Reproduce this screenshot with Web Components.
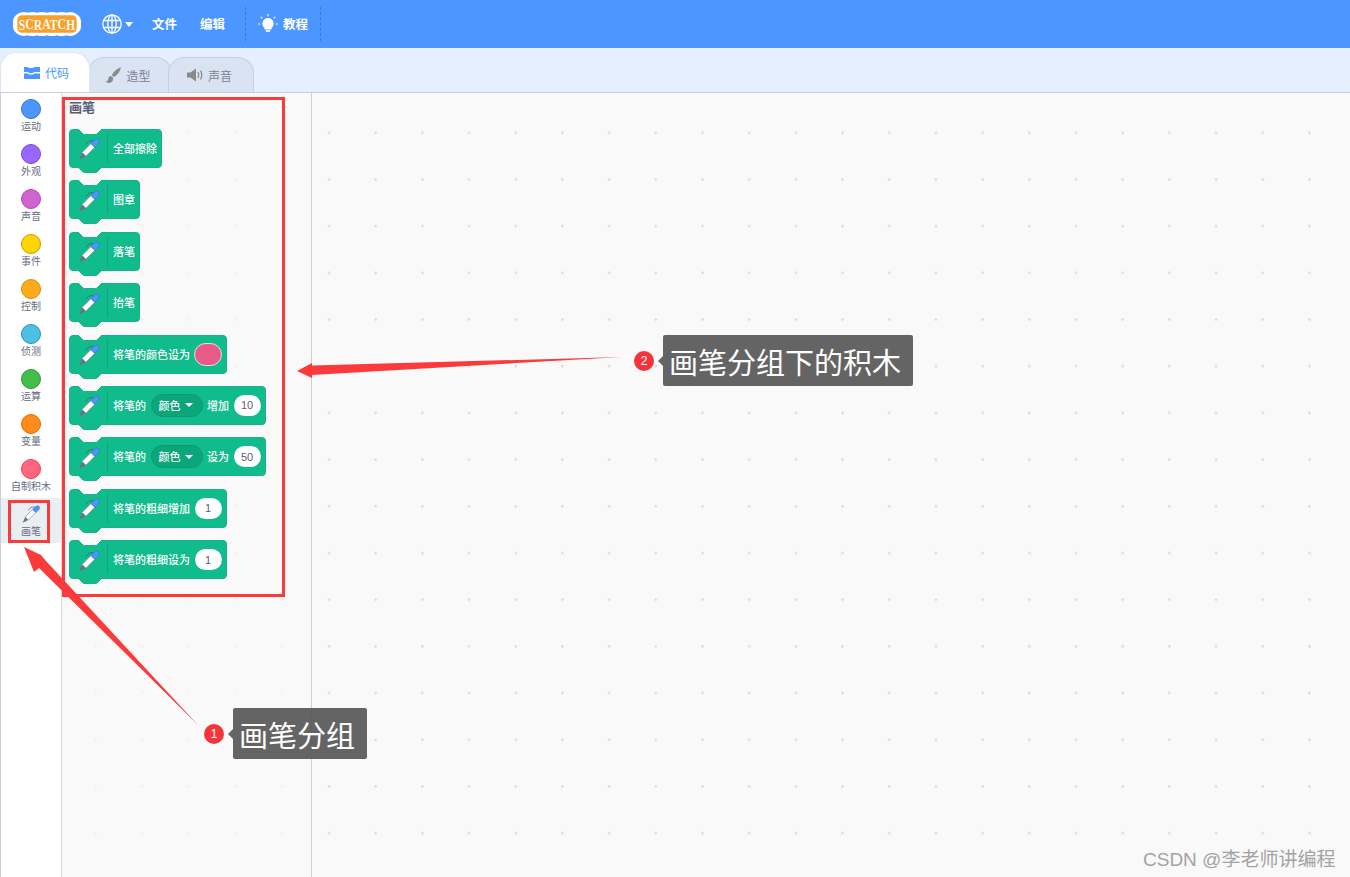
<!DOCTYPE html>
<html lang="zh">
<head>
<meta charset="utf-8">
<title>Scratch</title>
<style>
    html, body { margin: 0; height: 100%; overflow: hidden; }
    body { font-family: "Noto Sans CJK SC", "Liberation Sans", sans-serif; }
</style>
</head>
<body>
<scratch-app>
    <menu-bar></menu-bar>
    <editor-tabs></editor-tabs>
    <editor-body>
        <category-rail>
            <category-item color="#4c97ff" edge="#3373cc" label="运动"></category-item>
            <category-item color="#9966ff" edge="#774dcb" label="外观"></category-item>
            <category-item color="#cf63cf" edge="#bd42bd" label="声音"></category-item>
            <category-item color="#ffd500" edge="#cc9900" label="事件"></category-item>
            <category-item color="#ffab19" edge="#cf8b17" label="控制"></category-item>
            <category-item color="#4cbfe6" edge="#2e8eb8" label="侦测"></category-item>
            <category-item color="#40bf4a" edge="#389438" label="运算"></category-item>
            <category-item color="#ff8c1a" edge="#db6e00" label="变量"></category-item>
            <category-item color="#ff6680" edge="#ff3355" label="自制积木"></category-item>
            <category-item pen selected label="画笔"></category-item>
        </category-rail>
        <block-flyout title-text="画笔">
            <scratch-block>全部擦除</scratch-block>
            <scratch-block>图章</scratch-block>
            <scratch-block>落笔</scratch-block>
            <scratch-block>抬笔</scratch-block>
            <scratch-block>将笔的颜色设为<block-color></block-color></scratch-block>
            <scratch-block>将笔的<block-menu>颜色</block-menu>增加<block-input>10</block-input></scratch-block>
            <scratch-block>将笔的<block-menu>颜色</block-menu>设为<block-input>50</block-input></scratch-block>
            <scratch-block>将笔的粗细增加<block-input>1</block-input></scratch-block>
            <scratch-block>将笔的粗细设为<block-input>1</block-input></scratch-block>
        </block-flyout>
        <code-workspace></code-workspace>
    </editor-body>
    <callout-layer></callout-layer>
</scratch-app>

<script>
const PEN_SVG = `
    <svg viewBox="0 0 24 24" width="100%" height="100%">
        <path d="M8.500 7.500Q12 2.500 16.500 3.500" fill="none" stroke="#575e75" stroke-width=".9"/>
        <path d="M5 15.500L14 6.500L17.800 10.300L8.800 19.300Z" fill="#fff" stroke="#8a8fa3" stroke-width=".8"/>
        <path d="M14 6.500L17.500 3Q20 1.300 21.700 2.700Q23 4.300 21.300 6.800L17.800 10.300Z" fill="#4c97ff" stroke="#3d6fc4" stroke-width=".6"/>
        <path d="M5 15.500L8.800 19.300L2 22.500Z" fill="#6a6f8a"/>
    </svg>`;

class ScratchApp extends HTMLElement {
    constructor() {
        super();
        this.attachShadow({ mode: 'open' });
        this.shadowRoot.innerHTML = `
            <style>
                :host { display: flex; flex-direction: column; position: relative; height: 877px; width: 1350px; overflow: hidden; }
            </style>
            <slot></slot>`;
    }
}

class MenuBar extends HTMLElement {
    constructor() {
        super();
        this.attachShadow({ mode: 'open' });
        this.shadowRoot.innerHTML = `
            <style>
                :host { display: flex; align-items: center; height: 48px; flex: none; background: #4c97ff; color: #fff;
                        font-size: 12.500px; font-weight: 700; }
                .logo { width: 70px; height: 26px; margin-left: 12px; display: block; flex: none; }
                .logo text { font-family: "Liberation Serif", serif; font-weight: 700; font-size: 12px; }
                .lang { display: flex; align-items: center; margin-left: 20px; gap: 3px; }
                .caret { width: 0; height: 0; border: 4.500px solid transparent; border-top: 5px solid #fff; border-bottom: 0; }
                .item { white-space: nowrap; padding-bottom: 2px; }
                .file { margin-left: 19px; }
                .edit { margin-left: 23px; }
                .tutorial { display: flex; align-items: center; height: 34px; width: 76px; margin-left: 20px; padding-left: 12px;
                            box-sizing: border-box; gap: 5px; border-left: 1px dashed #3a78cc; border-right: 1px dashed #3a78cc; }
            </style>
            <svg class="logo" viewBox="0 0 72 28" preserveAspectRatio="none">
                <path d="M6 3Q11 0 16 2Q21 0 26 2Q31 0 36 2Q41 0 46 2Q51 0 56 2Q61 0 66 3Q72 7 71 14Q72 21 66 25Q61 28 56 26Q51 28 46 26Q41 28 36 26Q31 28 26 26Q21 28 16 26Q11 28 6 25Q0 21 1 14Q0 7 6 3Z" fill="#fff"/>
                <rect x="5.500" y="4.500" width="61" height="19" rx="5" fill="#f7a02c"/>
                <g transform="translate(0 -7.500) scale(1 1.400)">
                    <text x="7" y="20" dy="0 -1 1 -1 1 -1 1" fill="#fff8ea">SCRATCH</text>
                </g>
            </svg>
            <div class="lang">
                <svg width="20" height="20" viewBox="0 0 20 20" fill="none" stroke="#fff" stroke-width="1.300">
                    <circle cx="10" cy="10" r="9.200"/>
                    <ellipse cx="10" cy="10" rx="4.200" ry="9.200"/>
                    <path d="M10 .8V19.200M1.500 6.500H18.500M1.500 13.500H18.500"/>
                </svg>
                <span class="caret"></span>
            </div>
            <span class="item file">文件</span>
            <span class="item edit">编辑</span>
            <div class="tutorial">
                <svg width="20" height="20" viewBox="0 0 20 20" fill="none" stroke="#fff" stroke-width="1.200">
                    <path d="M10 4.500A5 5 0 0 1 13 13.500V15H7V13.500A5 5 0 0 1 10 4.500Z" fill="#fff"/>
                    <path d="M7.800 17H12.200" stroke-width="1.600"/>
                    <path d="M10 0V2.300M2.800 2.800L4.300 4.400M17.200 2.800L15.700 4.400M0 10H2.200M17.800 10H20"/>
                </svg>
                <span class="item">教程</span>
            </div>`;
    }
}

class EditorTabs extends HTMLElement {
    constructor() {
        super();
        this.attachShadow({ mode: 'open' });
        this.shadowRoot.innerHTML = `
            <style>
                :host { display: flex; align-items: flex-end; height: 45px; flex: none; box-sizing: border-box;
                        background: #e5f0ff; border-bottom: 1px solid #c5cfdd; font-size: 12px; color: #7c8192; }
                .tab { display: flex; align-items: center; justify-content: center; gap: 4px; box-sizing: border-box; height: 35px;
                       width: 84px; margin-left: -2px; padding-right: 4px; background: #d9e3f2; border: 1px solid #c5cfdd; border-bottom: 0;
                       border-radius: 16px 16px 0 0; }
                .active { position: relative; z-index: 1; height: 40px; width: 90px; margin-left: 0; padding: 0 0 0 2px; background: #fff;
                          border-color: #dde6f2; color: #4c97ff; }
                .sound { width: 86px; margin-left: -4px; padding-right: 3px; }
            </style>
            <div class="tab active">
                <svg width="18" height="12" viewBox="0 0 18 12">
                    <path d="M1 0H5L6 1H10L11 0H17V5H11L10 6H6L5 5H1Z" fill="#4c97ff"/>
                    <path d="M1 6.500H5L6 7.500H10L11 6.500H17V12H1Z" fill="#4c97ff"/>
                </svg>
                <span>代码</span>
            </div>
            <div class="tab">
                <svg width="17" height="17" viewBox="0 0 17 17">
                    <path d="M16 .5C13 1 9 4 6.800 8.200L9 10.200C12.500 7.500 15.500 4 16 .5Z" fill="#8a8a8a"/>
                    <path d="M5.800 9C3.500 9.300 3.500 11.500 3 13C2.600 14 1.500 14.500 .5 14.500C2 16.500 6 16.500 7.500 14C8.300 12.700 8.200 11 7.700 10.500Z" fill="#8a8a8a"/>
                </svg>
                <span>造型</span>
            </div>
            <div class="tab sound">
                <svg width="17" height="14" viewBox="0 0 17 14">
                    <path d="M0 4.500H3.500L9 .5V13.500L3.500 9.500H0Z" fill="#8a8a8a"/>
                    <path d="M11 4Q12.500 7 11 10M13.500 2.500Q16 7 13.500 11.500" fill="none" stroke="#8a8a8a" stroke-width="1.300"/>
                </svg>
                <span>声音</span>
            </div>`;
    }
}

class EditorBody extends HTMLElement {
    constructor() {
        super();
        this.attachShadow({ mode: 'open' });
        this.shadowRoot.innerHTML = `
            <style>
                :host { display: flex; flex: 1; min-height: 0; }
            </style>
            <slot></slot>`;
    }
}

class CategoryRail extends HTMLElement {
    constructor() {
        super();
        this.attachShadow({ mode: 'open' });
        this.shadowRoot.innerHTML = `
            <style>
                :host { display: flex; flex-direction: column; width: 62px; flex: none; box-sizing: border-box; background: #fff;
                        border-left: 1px solid #c5cfdd; border-right: 1px solid #d9d9d9; }
            </style>
            <slot></slot>`;
    }
}

class CategoryItem extends HTMLElement {
    constructor() {
        super();
        this.attachShadow({ mode: 'open' });
    }

    connectedCallback() {
        let label = this.getAttribute('label');
        let color = this.getAttribute('color');
        let edge = this.getAttribute('edge');
        let mark = this.hasAttribute('pen')
            ? `<div class="pen">${PEN_SVG}</div>`
            : `<div class="dot" style="background:${color};border-color:${edge}"></div>`;
        this.shadowRoot.innerHTML = `
            <style>
                :host { display: flex; flex-direction: column; align-items: center; height: 45px; box-sizing: border-box;
                        padding-top: 6px; font-size: 10px; color: #666c82; }
                :host([selected]) { background: #e9eef2; }
                .dot { width: 20px; height: 20px; box-sizing: border-box; border-radius: 50%; border: 1px solid; flex: none; }
                .pen { width: 20px; height: 20px; flex: none; }
                span { line-height: 14px; white-space: nowrap; }
            </style>
            ${mark}
            <span>${label}</span>`;
    }
}

class BlockFlyout extends HTMLElement {
    constructor() {
        super();
        this.attachShadow({ mode: 'open' });
    }

    connectedCallback() {
        this.shadowRoot.innerHTML = `
            <style>
                :host { display: flex; flex-direction: column; align-items: flex-start; width: 250px; flex: none; box-sizing: border-box;
                        padding: 4px 0 0 7px; gap: 12.400px; border-right: 1px solid #cfcfcf; background-color: #f9f9f9;
                        background-image: radial-gradient(circle, #f1f1f1 1px, transparent 1.500px);
                        background-size: 46.700px 46.700px; background-position: 10.300px 16.450px; }
                h2 { margin: 0 0 1px; height: 18.600px; font-size: 13px; line-height: 20px; font-weight: 700; color: #575e75; }
            </style>
            <h2>${this.getAttribute('title-text')}</h2>
            <slot></slot>`;
    }
}

class ScratchBlock extends HTMLElement {
    constructor() {
        super();
        this.attachShadow({ mode: 'open' });
        this.shadowRoot.innerHTML = `
            <style>
                :host { display: inline-flex; align-items: center; gap: 4.500px; position: relative; height: 39px; box-sizing: border-box;
                        padding-right: 4px; background: #10bc8c; border: 1px solid #1ab08a; border-radius: 4px; color: #fff;
                        font-size: 11px; font-weight: 500; line-height: 1; white-space: nowrap; }
                .pen { width: 24px; height: 24px; margin: 2px 1.500px 0 7px; flex: none; }
                .sep { width: 1px; height: 29px; background: #0da57a; margin-right: .5px; flex: none; }
                .notch, .bump { position: absolute; left: 8px; width: 24px; height: 6px; display: block; }
                .notch { top: -1px; }
                .bump { bottom: -6px; }
            </style>
            <svg class="notch" viewBox="0 0 24 6"><path d="M0 0L5 5Q5.500 5.500 6.500 5.500H17.500Q18.500 5.500 19 5L24 0Z" fill="#f9f9f9" stroke="#1ab08a" stroke-width="1"/><path d="M1 0H23" stroke="#f9f9f9" stroke-width="2"/></svg>
            <svg class="bump" viewBox="0 0 24 6"><path d="M0 0L5 5Q5.500 5.500 6.500 5.500H17.500Q18.500 5.500 19 5L24 0Z" fill="#10bc8c" stroke="#1ab08a" stroke-width="1"/><path d="M1 -.2H23" stroke="#10bc8c" stroke-width="1.500"/></svg>
            <div class="pen">${PEN_SVG}</div>
            <div class="sep"></div>
            <slot></slot>`;
    }
}

class BlockMenu extends HTMLElement {
    constructor() {
        super();
        this.attachShadow({ mode: 'open' });
        this.shadowRoot.innerHTML = `
            <style>
                :host { display: inline-flex; align-items: center; gap: 4px; height: 23px; box-sizing: border-box; padding: 0 9px 0 7px;
                        background: #0da57a; border: 1px solid #0b9a72; border-radius: 12px; font-size: 11px; }
                i { width: 0; height: 0; border: 4px solid transparent; border-top: 4.500px solid #fff; border-bottom: 0; }
            </style>
            <slot></slot><i></i>`;
    }
}

class BlockInput extends HTMLElement {
    constructor() {
        super();
        this.attachShadow({ mode: 'open' });
        this.shadowRoot.innerHTML = `
            <style>
                :host { display: inline-flex; align-items: center; justify-content: center; width: 27px; height: 21px; background: #fff;
                        border-radius: 11px; color: #575e75; font: 11px "Liberation Sans", sans-serif; }
            </style>
            <slot></slot>`;
    }
}

class BlockColor extends HTMLElement {
    constructor() {
        super();
        this.attachShadow({ mode: 'open' });
        this.shadowRoot.innerHTML = `
            <style>
                :host { display: block; width: 28px; height: 23px; box-sizing: border-box; margin-left: -1px; background: #e95a8b;
                        border: 1px solid #dfe6e8; border-radius: 11.500px; }
            </style>`;
    }
}

class CodeWorkspace extends HTMLElement {
    constructor() {
        super();
        this.attachShadow({ mode: 'open' });
        this.shadowRoot.innerHTML = `
            <style>
                :host { display: block; flex: 1; background-color: #f9f9f9;
                        background-image: radial-gradient(circle, #dcdcdc 1px, transparent 1.500px);
                        background-size: 46.700px 46.700px; background-position: -6.350px 16.450px; }
            </style>`;
    }
}

class CalloutTag extends HTMLElement {
    constructor() {
        super();
        this.attachShadow({ mode: 'open' });
        this.shadowRoot.innerHTML = `
            <style>
                :host { position: absolute; display: flex; align-items: center; gap: 9px; color: #fff; }
                b { width: 20px; height: 20px; border-radius: 50%; background: #f5333a; font: 12px/20px "Liberation Sans", sans-serif;
                    text-align: center; }
                div { position: relative; height: 51px; padding: 0 12px 0 6px; background: rgba(90, 90, 90, .94); border-radius: 2px;
                      font-size: 29px; line-height: 53px; white-space: nowrap; }
                div::before { content: ""; position: absolute; left: -5px; top: 21px; border: 5px solid transparent;
                              border-left: 0; border-right-color: #666; }
            </style>
            <b>${this.getAttribute('num')}</b><div><slot></slot></div>`;
    }
}

class CalloutLayer extends HTMLElement {
    constructor() {
        super();
        this.attachShadow({ mode: 'open' });
        this.shadowRoot.innerHTML = `
            <style>
                :host { position: absolute; inset: 0; pointer-events: none; }
                svg { position: absolute; left: 0; top: 0; }
                .box { position: absolute; box-sizing: border-box; border: 3px solid #fb3a3c; }
                .mark { position: absolute; left: 1143px; top: 844px; font: 19px "Liberation Sans", "Noto Sans CJK SC", sans-serif;
                        color: #a3a3a3; white-space: nowrap; }
            </style>
            <div class="box" style="left:62px;top:97px;width:223px;height:500px"></div>
            <div class="box" style="left:8px;top:500px;width:42px;height:43px"></div>
            <svg width="1350" height="877">
                <path d="M24 547L41 555L46 561L198 725L39 568L34 572Z" fill="#fb3a3c"/>
                <path d="M297 371L312 363L312 365.500L622 357L312 375L312 378Z" fill="#fb3a3c"/>
            </svg>
            <callout-tag num="1" style="left:204px;top:708px">画笔分组</callout-tag>
            <callout-tag num="2" style="left:634px;top:335px">画笔分组下的积木</callout-tag>
            <div class="mark">CSDN @李老师讲编程</div>`;
    }
}

customElements.define('scratch-app', ScratchApp);
customElements.define('menu-bar', MenuBar);
customElements.define('editor-tabs', EditorTabs);
customElements.define('editor-body', EditorBody);
customElements.define('category-rail', CategoryRail);
customElements.define('category-item', CategoryItem);
customElements.define('block-flyout', BlockFlyout);
customElements.define('scratch-block', ScratchBlock);
customElements.define('block-menu', BlockMenu);
customElements.define('block-input', BlockInput);
customElements.define('block-color', BlockColor);
customElements.define('code-workspace', CodeWorkspace);
customElements.define('callout-tag', CalloutTag);
customElements.define('callout-layer', CalloutLayer);
</script>
</body>
</html>
